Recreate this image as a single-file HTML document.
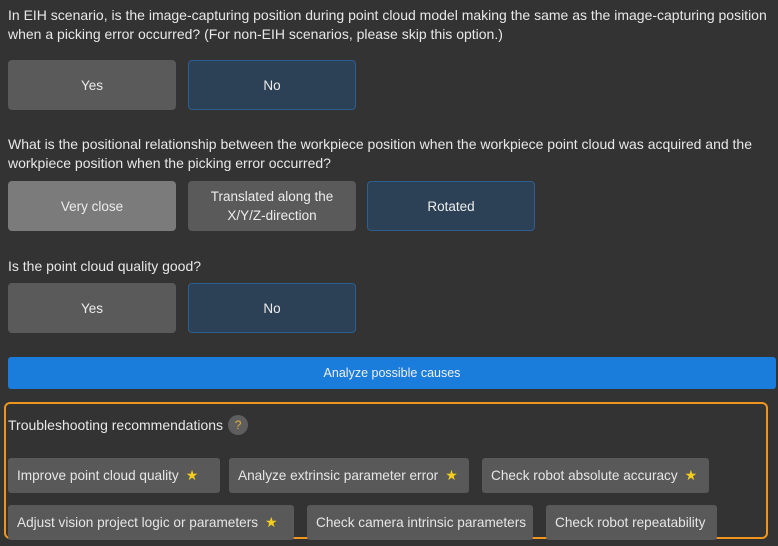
<!DOCTYPE html>
<html><head><style>
*{margin:0;padding:0;box-sizing:border-box}
body{width:778px;height:546px;background:#333333;font-family:"Liberation Sans",sans-serif;color:#e6e6e6;position:relative;overflow:hidden;font-size:13px}
.t{position:absolute;left:8px;line-height:19px;font-size:14px;color:#e8e8e8;white-space:nowrap}
.b{position:absolute;height:50px;width:168px;border-radius:4px;background:#5a5a5a;display:flex;align-items:center;justify-content:center;text-align:center;font-size:13.5px;line-height:19px;color:#ececec}
.n{background:#2d4156;border:1px solid #2e5e8f}
.s{background:#7b7b7b}
.r{position:absolute;height:35px;background:#595959;border-radius:3px;display:flex;align-items:center;padding-left:9px;font-size:13.6px;color:#e6e6e6;white-space:nowrap}
.st{color:#f5cf1c;margin-left:7px;font-size:14px}
</style></head><body>
<div class="t" style="top:6px">In EIH scenario, is the image-capturing position during point cloud model making the same as the image-capturing position<br>when a picking error occurred? (For non-EIH scenarios, please skip this option.)</div>
<div class="b" style="left:8px;top:60px">Yes</div>
<div class="b n" style="left:188px;top:60px">No</div>
<div class="t" style="top:135px">What is the positional relationship between the workpiece position when the workpiece point cloud was acquired and the<br>workpiece position when the picking error occurred?</div>
<div class="b s" style="left:8px;top:181px">Very close</div>
<div class="b" style="left:188px;top:181px">Translated along the<br>X/Y/Z-direction</div>
<div class="b n" style="left:367px;top:181px">Rotated</div>
<div class="t" style="top:257px">Is the point cloud quality good?</div>
<div class="b" style="left:8px;top:283px">Yes</div>
<div class="b n" style="left:188px;top:283px">No</div>
<div style="position:absolute;left:8px;top:357px;width:768px;height:32px;background:#1a7ddb;border-radius:3px;color:#f0f0f0;font-size:12.5px;display:flex;align-items:center;justify-content:center">Analyze possible causes</div>
<div style="position:absolute;left:4px;top:402px;width:764px;height:137px;border:2px solid #ee941f;border-radius:6px"></div>
<div style="position:absolute;left:8px;top:415px;font-size:14px;color:#e8e8e8;display:flex;align-items:center">Troubleshooting recommendations<span style="display:inline-block;width:20px;height:20px;border-radius:50%;background:#5e5e5e;color:#e0b040;font-size:12px;text-align:center;line-height:20px;margin-left:5px">?</span></div>
<div class="r" style="left:8px;top:458px;width:212px">Improve point cloud quality<span class="st">★</span></div>
<div class="r" style="left:229px;top:458px;width:240px">Analyze extrinsic parameter error<span class="st">★</span></div>
<div class="r" style="left:482px;top:458px;width:227px">Check robot absolute accuracy<span class="st">★</span></div>
<div class="r" style="left:8px;top:505px;width:286px">Adjust vision project logic or parameters<span class="st">★</span></div>
<div class="r" style="left:307px;top:505px;width:226px">Check camera intrinsic parameters</div>
<div class="r" style="left:546px;top:505px;width:171px">Check robot repeatability</div>
</body></html>
